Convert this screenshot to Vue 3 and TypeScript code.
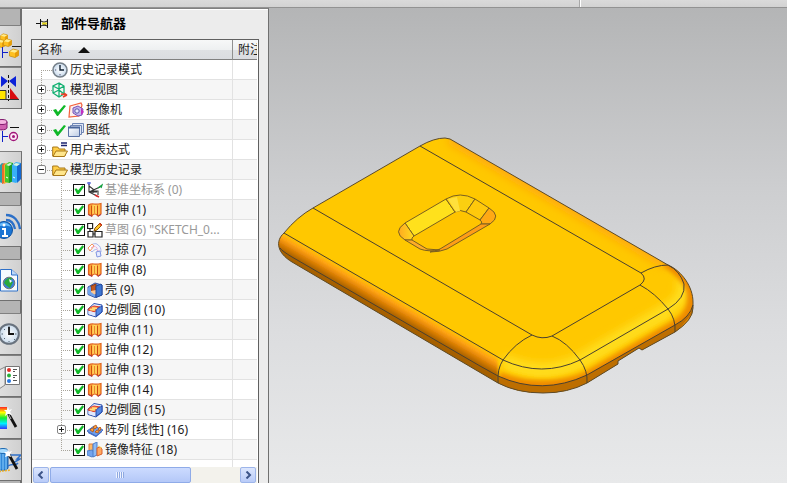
<script setup lang="ts">
import { ref } from 'vue'

interface TreeRow {
  name: string
  icon: string
  level: 0 | 1
  toggle?: 'plus' | 'minus'
  mark?: boolean
  checked?: boolean
  muted?: boolean
}

interface RailTab {
  id: string
  title: string
  spaced?: boolean
  active?: boolean
}

const tabs: RailTab[] = [
  { id: 'assembly', title: '装配导航器' },
  { id: 'constraint', title: '约束导航器' },
  { id: 'part', title: '部件导航器', active: true },
  { id: 'library', title: '重用库' },
  { id: 'web', title: 'HD3D 工具', spaced: true },
  { id: 'page', title: 'Web 浏览器', spaced: true },
  { id: 'history', title: '历史记录', spaced: true },
  { id: 'roles', title: '角色' },
  { id: 'material', title: '系统材料' },
  { id: 'wizard', title: '加工向导' },
]

const rows = ref<TreeRow[]>([
  { name: '历史记录模式', icon: 'clock', level: 0 },
  { name: '模型视图', icon: 'views', level: 0, toggle: 'plus' },
  { name: '摄像机', icon: 'camera', level: 0, toggle: 'plus', mark: true },
  { name: '图纸', icon: 'sheet', level: 0, toggle: 'plus', mark: true },
  { name: '用户表达式', icon: 'folder-eq', level: 0, toggle: 'plus' },
  { name: '模型历史记录', icon: 'folder', level: 0, toggle: 'minus' },
  { name: '基准坐标系 (0)', icon: 'csys', level: 1, checked: true, muted: true },
  { name: '拉伸 (1)', icon: 'extrude', level: 1, checked: true },
  { name: '草图 (6) "SKETCH_0...', icon: 'sketch', level: 1, checked: true, muted: true },
  { name: '扫掠 (7)', icon: 'sweep', level: 1, checked: true },
  { name: '拉伸 (8)', icon: 'extrude', level: 1, checked: true },
  { name: '壳 (9)', icon: 'shell', level: 1, checked: true },
  { name: '边倒圆 (10)', icon: 'blend', level: 1, checked: true },
  { name: '拉伸 (11)', icon: 'extrude', level: 1, checked: true },
  { name: '拉伸 (12)', icon: 'extrude', level: 1, checked: true },
  { name: '拉伸 (13)', icon: 'extrude', level: 1, checked: true },
  { name: '拉伸 (14)', icon: 'extrude', level: 1, checked: true },
  { name: '边倒圆 (15)', icon: 'blend', level: 1, checked: true },
  { name: '阵列 [线性] (16)', icon: 'pattern', level: 1, toggle: 'plus', checked: true },
  { name: '镜像特征 (18)', icon: 'mirror', level: 1, checked: true },
])

function branchClass(index: number): string {
  const level = rows.value[index].level
  const first = index === 0
  const last = index === rows.value.length - 1 || rows.value[index + 1].level < level
  const closing = level === 0 && rows.value.slice(index + 1).every((r) => r.level > 0)
  return first ? 'branch-first' : last || closing ? 'branch-last' : 'branch-mid'
}
</script>

<template>
  <div class="app">
    <svg class="sprite" aria-hidden="true">
      <defs>
        <linearGradient id="gOrange" x1="0" x2="1"><stop offset="0" stop-color="#ff8a20" /><stop offset=".45" stop-color="#ffd860" /><stop offset="1" stop-color="#ffb43c" /></linearGradient>
        <linearGradient id="gBlue" x1="0" x2="1" y2="1"><stop offset="0" stop-color="#9cc8ff" /><stop offset="1" stop-color="#2a5fc4" /></linearGradient>
        <linearGradient id="gSheet" x1="0" x2="1" y2="1"><stop offset="0" stop-color="#fff" /><stop offset="1" stop-color="#bccbe4" /></linearGradient>
        <linearGradient id="gRain" x1="0" x2="0" y2="1">
          <stop offset="0" stop-color="#f22" /><stop offset=".25" stop-color="#ff0" /><stop offset=".5" stop-color="#1e3" />
          <stop offset=".75" stop-color="#0ef" /><stop offset="1" stop-color="#33f" />
        </linearGradient>
        <radialGradient id="gFace"><stop offset="0" stop-color="#fff" /><stop offset="1" stop-color="#c8daec" /></radialGradient>
      </defs>
      <symbol id="i-clock" viewBox="0 0 16 16">
        <circle cx="8" cy="8" r="7" fill="url(#gFace)" stroke="#76808a" stroke-width="1.6" />
        <path d="M8 3v5h4" fill="none" stroke="#123" stroke-width="1.4" />
        <path d="M8 12v1.4M3 8h1.2" stroke="#557" />
      </symbol>
      <symbol id="i-views" viewBox="0 0 16 16">
        <path d="M7 1L1 4v7l6 4 5-3V4zM1 4l6 3 5-3M7 1v14M1 11l6-3 5 4" fill="none" stroke="#10b070" stroke-width="1.3" />
        <path d="M9 12l6 1-3-2M15 13l-4 2" fill="none" stroke="#e8402a" stroke-width="1.5" />
      </symbol>
      <symbol id="i-camera" viewBox="0 0 16 16">
        <path d="M2 4l11-3 1 2-3 11-10 1z" fill="#fff0ec" stroke="#f4603c" stroke-width="1.2" />
        <path d="M5 6l5-2 5 3-1 6-4 1-5-3z" fill="#c4b4ec" stroke="#7752b8" />
        <circle cx="9" cy="9" r="2.2" fill="#eae6ff" stroke="#5858a8" />
        <path d="M13 6l3 4-3 3z" fill="#c42fc0" />
      </symbol>
      <symbol id="i-sheet" viewBox="0 0 16 16">
        <path d="M4.500 1.500h11v9h-11z" fill="#dfe6f5" stroke="#6f86b4" />
        <path d="M2.500 3.500h11v9h-11z" fill="#dfe6f5" stroke="#6f86b4" />
        <path d="M.5 5.500h11v9H.5z" fill="url(#gSheet)" stroke="#5a72a6" />
        <path d="M0 5.500h12" stroke="#4a669c" stroke-width="2" />
      </symbol>
      <symbol id="i-folder" viewBox="0 0 16 16">
        <path d="M.7 13V4h5l1.500 2H13v7z" fill="#ffce48" stroke="#a87818" />
        <path d="M1 13.500L4 8h11.500L12.500 13.500z" fill="#ffe68c" stroke="#a87818" />
      </symbol>
      <symbol id="i-folder-eq" viewBox="0 0 16 16">
        <path d="M.7 14V5h5l1.500 2H13v7z" fill="#ffce48" stroke="#a87818" />
        <path d="M1 14.500L4 9h11.500L12.500 14.500z" fill="#ffe68c" stroke="#a87818" />
        <path d="M9 1h6M9 3.500h6" stroke="#1c2470" stroke-width="1.4" />
      </symbol>
      <symbol id="i-csys" viewBox="0 0 16 16">
        <path d="M2 2v8l8 4M2 10l11-5M2 4l4 3v4M6 9h5v4M2 10h8" fill="none" stroke="#333" stroke-width="1.1" />
        <path d="M0 1h4M2 0v3" stroke="#3346d0" />
        <path d="M11 6l4-3-1 3" stroke="#16a040" fill="none" stroke-width="1.3" />
        <path d="M8 13l4 2" stroke="#d82828" stroke-width="1.6" />
      </symbol>
      <symbol id="i-extrude" viewBox="0 0 16 16">
        <path d="M1.500 3Q4 1.500 7 2t7-.5v10.500L11 14l-1.500-1.500Q8 11.500 6 12.500L5 14l-3.500-1.500z" fill="url(#gOrange)" stroke="#e0601c" stroke-width="1.200" />
        <path d="M4.500 3.500V14M10.500 3.500V13.500" stroke="#d04c10" />
        <path d="M7.500 4v7.500" stroke="#e88430" />
        <path d="M1.500 12.500L5 14.500M11 14.500l3-2" fill="none" stroke="#a03464" />
      </symbol>
      <symbol id="i-sketch" viewBox="0 0 16 16">
        <path d="M.6 1.500h5v5h-5zM1 9.500h5V15H1zM8 9.500h7V15H8zM3 6.500v3M6 12h2" fill="#fff" stroke="#222" stroke-width="1.2" />
        <path d="M7 9l1-3 5-5 2 2-5 5z" fill="#ffc62c" stroke="#90580c" />
        <path d="M12.500 1.500l2 2" stroke="#e03020" stroke-width="1.600" />
      </symbol>
      <symbol id="i-sweep" viewBox="0 0 16 16">
        <path d="M2 7c1-5 7-7 9-4 2 1 3 3 3 7l-3 1c0-4-2-5-6-1z" fill="#f2f3fd" stroke="#aab6e8" />
        <path d="M1 6l4-4 2 2-4 5z" fill="#fff" stroke="#f4965c" />
        <path d="M9 10l4-1 1 5-4 1z" fill="#e6ebff" stroke="#8296e2" />
        <path d="M4 6c3-3 6-2 7 3" fill="none" stroke="#f29ac8" stroke-dasharray="2 1" />
      </symbol>
      <symbol id="i-shell" viewBox="0 0 16 16">
        <path d="M1 5l7-4 7 2v10l-7 2.500-7-3z" fill="url(#gBlue)" stroke="#3858a8" />
        <path d="M4 4l5-2v10l-5-2z" fill="#c45a20" stroke="#8c3a10" />
        <path d="M4 9l5-1v4l-3 1-2-2z" fill="#ffc890" />
        <path d="M9 4l5-2 1 1v10l-6 2.500z" fill="#3c76d2" stroke="#24489c" />
        <path d="M1 6l3-1v5l4 3v2l-7-3z" fill="#70a4ec" />
      </symbol>
      <symbol id="i-blend" viewBox="0 0 16 16">
        <path d="M1 7l6-5.500 8 1.500v7L9 15l-8-2.500z" fill="#e7efff" stroke="#2c50b0" />
        <path d="M1 8c1-3 4-3 6-4l6 1c-3 1-5 2-5 5z" fill="#ff8c50" stroke="#dc3c28" />
        <path d="M3 7.500l5 .5M5 6l5 .5" stroke="#ffe07a" stroke-width="1.500" />
        <path d="M1.500 9L8 10.500V14L1.500 12z" fill="#dfe8ff" />
        <path d="M9 10c0-3 2-4 6-6v6l-6 4.500z" fill="#5589e4" stroke="#2448a8" />
      </symbol>
      <symbol id="i-pattern" viewBox="0 0 16 16">
        <path d="M0 9l7-5 9 4-7 6z" fill="#6b9cec" stroke="#4a70c0" />
        <path d="M1 10l8 4 6-5v1l-6 5-8-4z" fill="#2e5cc0" />
        <path d="M3 8l2-2 2 1-1 3zM6 5l3-2 1 2-2 2zM8 10l2-2 2 1-1 2zM11 7l2-2 1 1-1 3z" fill="#ffa038" stroke="#b05418" stroke-width=".8" />
      </symbol>
      <symbol id="i-mirror" viewBox="0 0 16 16">
        <path d="M2 2h4v7l-4 3z" fill="#ffb864" stroke="#e07c3c" />
        <path d="M0 9l5-1 4 5-4 2-5-2z" fill="#72a4ee" stroke="#5080c8" />
        <path d="M6 2l4-2v13l-4 2z" fill="#8cbaf4" stroke="#4c7cc8" />
        <path d="M10 6l3-1 2 2v5l-5 2z" fill="#ffa860" stroke="#d8602c" />
        <path d="M11 4l4 2" fill="none" stroke="#f7d060" />
      </symbol>
      <symbol id="i-cube" viewBox="0 0 10 10">
        <path d="M.5 3.500L4 1l5.500 1.500v5L6 9.500.5 8z" fill="#ffc020" stroke="#c89010" stroke-width=".8" />
        <path d="M1 3.500l3-2 5 1.200-3 2z" fill="#ffec90" />
        <path d="M6 5l3.500-2.500v5L6 9.500z" fill="#e79c08" />
      </symbol>
    </svg>

    <header class="topbar"><div class="topbar-group"></div></header>

    <div class="workspace">
      <aside class="navigator">
        <nav class="rail" aria-label="资源条">
          <button
            v-for="tab in tabs"
            :key="tab.id"
            type="button"
            class="tab"
            :class="{ active: tab.active, spaced: tab.spaced }"
            :aria-label="tab.title"
          >
            <svg width="21" height="40" viewBox="0 1 21 40" aria-hidden="true">
              <g v-if="tab.id === 'assembly'">
                <use href="#i-cube" x="-4" y="13" width="10" height="10" /><use href="#i-cube" x="0" y="8" width="8" height="8" />
                <use href="#i-cube" x="3" y="13" width="9" height="9" />
                <path d="M12 21.500h9" stroke="#222" /><path d="M2.500 22v11M2 27.500h6" stroke="#1020c8" />
                <use href="#i-cube" x="9" y="23" width="10" height="10" />
              </g>
              <g v-else-if="tab.id === 'constraint'">
                <path d="M1 9l7 5-7 6zM16 9l-7 5 7 6z" fill="#0c22d8" />
                <path d="M8.500 8v26" stroke="#111" stroke-dasharray="3 2" />
                <path d="M-1 23.500h7v9h-7z" fill="#ffe600" stroke="#333" />
                <path d="M10 21v11.500h9z" fill="#d80c10" /><path d="M-1 32.500h20" stroke="#333" />
              </g>
              <g v-else-if="tab.id === 'part'">
                <path d="M-3 13v6c1 2.500 9 2.500 10 0v-6" fill="#d060b0" stroke="#80186c" />
                <ellipse cx="2" cy="13" rx="5" ry="2.500" fill="#f4b4e0" stroke="#80186c" />
                <path d="M10 18.500h9" stroke="#111" /><path d="M2.500 22v11M2 27.500h6" stroke="#1020c8" />
                <circle cx="13.500" cy="27.500" r="4" fill="#fbe4f4" stroke="#a01478" stroke-width="1.3" /><circle cx="13.500" cy="27.500" r="1.500" fill="#a01478" />
              </g>
              <g v-else-if="tab.id === 'library'">
                <path d="M-1 15l3-3 3 1v16l-3 3-3-1z" fill="#28a0a8" /><path d="M2 14l2-2 2 1-1 2v17l-3 1z" fill="#e86c30" />
                <path d="M4 14l2-2 2 1v18l-4 2z" fill="#f8b030" /><path d="M5 14l4-3 4 1v18l-4 2-4-1z" fill="#44c82c" />
                <path d="M9 14l4-2v18l-4 2z" fill="#189830" /><path d="M12 14l4-3 5 1-1 17-4 3-4-1z" fill="#38b0f8" />
                <path d="M17 15l4-3v16l-4 4z" fill="#1468d0" /><path d="M6 14l4-2 2 1-3 2zM13 14l3-2 4 1-3 2z" fill="#d8f4e0" />
                <path d="M6 26l2 1M13 26l2 1" stroke="#fff" />
              </g>
              <g v-else-if="tab.id === 'web'">
                <path d="M6 10c8 0 13 6 14 14M6 15c5 0 8 4 9 9" fill="none" stroke="#2c70c8" stroke-width="2.300" />
                <circle cx="4" cy="25" r="8.500" fill="#1b75d4" stroke="#0c50a0" /><path d="M-3 22c3-6 11-6 14 0-4-2-9-2-14 0z" fill="#68b8f8" />
                <path d="M2 24h3v7M2 31h6" fill="none" stroke="#fff" stroke-width="2" /><circle cx="4" cy="20" r="1.500" fill="#fff" />
              </g>
              <g v-else-if="tab.id === 'page'">
                <path d="M.5 10.500h11l6 5.500v16H.5z" fill="#f6fbff" stroke="#2e70c8" /><path d="M11.500 10.500V16h6" fill="#bcd8f8" stroke="#2e70c8" />
                <circle cx="9" cy="24" r="5.800" fill="#3a80d8" stroke="#777" /><path d="M4 24c1-4 5-6 8-5l-2 3 3 1-3 6-3-2z" fill="#2ca83c" /><path d="M9 20l3 2-2 2z" fill="#fff" />
              </g>
              <g v-else-if="tab.id === 'history'">
                <circle cx="9" cy="21" r="9.800" fill="url(#gFace)" stroke="#68727e" stroke-width="2" />
                <path d="M9 14v7h5" fill="none" stroke="#111" stroke-width="1.800" />
                <path d="M9 13v1M9 28v1M1.500 21H3M15 21h1.500M4 16l1 1M14 26l1 1M4 26l1-1" stroke="#567" />
              </g>
              <g v-else-if="tab.id === 'roles'">
                <path d="M-1 15l6-3v18l-6 4z" fill="#e8e8e8" stroke="#888" /><path d="M5.500 11.500h14v18h-14z" fill="#fff" stroke="#777" />
                <circle cx="9" cy="15" r="2" fill="#e03028" /><circle cx="9" cy="20.500" r="2" fill="#28b038" /><circle cx="9" cy="26" r="2" fill="#2878e0" />
                <path d="M13 14.500h4M13 16.500h2M13 20.500h4M13 22.500h2M13 25.500h4" stroke="#555" />
              </g>
              <g v-else-if="tab.id === 'material'">
                <path d="M0 10h7v22H0z" fill="url(#gRain)" /><path d="M7 14l9 16" stroke="#111" stroke-width="2.800" />
                <path d="M8 10l1 3 3-1-2 3 2 3-4-1-3 2 1-4-2-2h3z" fill="#fff" /><path d="M9 18l2 4" stroke="#bbb" />
              </g>
              <g v-else>
                <path d="M-2 13v16c1 3 9 3 10 0V13" fill="#3288d8" stroke="#1456a0" /><path d="M0 14v17M3 14v17M6 14v17" stroke="#8cd0ff" />
                <ellipse cx="3" cy="12" rx="5" ry="2.500" fill="#a8dcff" stroke="#1c68b0" />
                <path d="M9 16h12l-4 4h3l-7 4M8 27c4-3 8 0 10-3" fill="none" stroke="#3070c8" stroke-width="1.500" />
                <path d="M8 14l9 16" stroke="#111" stroke-width="2.800" /><path d="M8 10l1 3 3-1-2 3 1 3-3-1-3 1 1-3-2-2h3z" fill="#fff" />
                <path d="M-1 33c4-2 8-1 11-2" stroke="#f0b020" stroke-width="1.500" stroke-dasharray="2 1" fill="none" />
              </g>
            </svg>
          </button>
        </nav>

        <section class="panel">
          <h1 class="panel-title">
            <svg width="12" height="11" viewBox="0 0 12 11" aria-hidden="true">
              <path d="M0 5.500h5M4.500 1v9M11.500 1v9M5 3l2 1h2l2-1M5 8l2-1h2l2 1M7 7h3" fill="none" stroke="#111" />
              <path d="M6 4.500h5v2H6z" fill="#e8d820" />
            </svg>
            <span>部件导航器</span>
          </h1>

          <div class="tree">
            <table>
              <colgroup><col class="col-name" /><col /></colgroup>
              <thead>
                <tr>
                  <th scope="col"><span class="head">名称<svg width="12" height="6" viewBox="0 0 12 6" aria-hidden="true"><path d="M6 0L12 6H0z" fill="#111" /></svg></span></th>
                  <th scope="col"><span class="head head-note">附注</span></th>
                </tr>
              </thead>
              <tbody>
                <tr v-for="(row, i) in rows" :key="i">
                  <td>
                    <div class="row">
                      <span v-if="row.level === 1" class="slot"></span>
                      <span class="slot branch" :class="branchClass(i)">
                        <button v-if="row.toggle" type="button" class="toggle" :class="row.toggle" :aria-label="'展开或折叠 ' + row.name"></button>
                      </span>
                      <label v-if="row.level === 1" class="entry">
                        <span class="box"><input v-model="row.checked" type="checkbox" /></span>
                        <svg class="icon" aria-hidden="true"><use :href="'#i-' + row.icon" /></svg>
                        <span class="name" :class="{ muted: row.muted }">{{ row.name }}</span>
                      </label>
                      <span v-else class="entry">
                        <svg v-if="row.mark" class="icon" viewBox="0 0 16 16" aria-hidden="true"><path d="M1 8l3-1 2 3 6-7 2 1-8 10H5z" fill="#10b828" /></svg>
                        <svg class="icon" aria-hidden="true"><use :href="'#i-' + row.icon" /></svg>
                        <span class="name">{{ row.name }}</span>
                      </span>
                    </div>
                  </td>
                  <td></td>
                </tr>
                <tr class="filler"><td></td><td></td></tr>
              </tbody>
            </table>
            <div class="scrollbar">
              <button type="button" class="arrow" aria-label="向左滚动"><svg width="8" height="8" viewBox="0 0 8 8"><path d="M5.500.5L2 4l3.500 3.500" /></svg></button>
              <div class="track"><div class="thumb"></div></div>
              <button type="button" class="arrow" aria-label="向右滚动"><svg width="8" height="8" viewBox="0 0 8 8"><path d="M2.500.5L6 4 2.500 7.500" /></svg></button>
            </div>
          </div>
        </section>
      </aside>

      <main class="viewport">
        <svg class="model" viewBox="269 8 518 475" preserveAspectRatio="xMinYMin meet" role="img" aria-label="三维模型">
          <defs>
            <clipPath id="body">
              <path d="M284 233Q297 217 313 208L420 146Q434 138 445 138L450 139L668 265C682 271 693 287 693 302V308Q693 320 675 332L642 350L639 348L618 361V364L587 383Q568 393 543 393Q517 393 498 383L292 262C277 253 275 241 284 233Z" />
            </clipPath>
            <filter id="soft4" x="-10%" y="-10%" width="120%" height="120%"><feGaussianBlur stdDeviation="4" /></filter>
            <filter id="soft2" x="-10%" y="-10%" width="120%" height="120%"><feGaussianBlur stdDeviation="2" /></filter>
            <filter id="soft1" x="-10%" y="-10%" width="120%" height="120%"><feGaussianBlur stdDeviation="1" /></filter>
            <linearGradient id="side" gradientUnits="userSpaceOnUse" x1="393" y1="296" x2="382" y2="315">
              <stop offset="0" stop-color="#ffc400" /><stop offset=".25" stop-color="#ffa214" /><stop offset=".5" stop-color="#dc7f04" />
              <stop offset=".75" stop-color="#a86200" /><stop offset="1" stop-color="#a46000" />
            </linearGradient>
            <linearGradient id="wallA" x1="0" x2="1"><stop offset="0" stop-color="#ffaa20" /><stop offset="1" stop-color="#ffdc20" /></linearGradient>
          </defs>
          <g clip-path="url(#body)">
            <path d="M270 130h430v270H270z" fill="#ffc800" />
            <path d="M450 137L668 263" class="s-warm" filter="url(#soft4)" />
            <path d="M503 360Q542 379 580 360L668 309Q688 297 682 279" class="s-light" filter="url(#soft4)" />
            <path d="M498 380Q542 397 587 380L675 329Q693 319 695 302V292Q690 274 668 260" class="s-orange" filter="url(#soft2)" />
            <path d="M498 376Q542 396 587 375L675 325Q692 316 693 305V312L675 334L587 386Q542 402 498 386Z" fill="#b06600" opacity=".8" />
            <path d="M506 365Q542 380 580 365L668 314" class="s-glow" filter="url(#soft2)" />
            <path d="M270 225L284 233L497 357Q499 372 498 390L270 256Z" fill="url(#side)" filter="url(#soft1)" />
          </g>
          <g class="pocket">
            <path class="flat" d="M398 230Q399 226 405 223L446 199Q452 195 460 195Q468 195 475 199L489 208Q496 212 496 217Q496 221 490 224L447 249Q440 252 430 252Q424 251 420 248L402 237Q398 234 398 230Z" fill="#ffc400" />
            <path d="M405 223L446 199L455 212L414 236Z" fill="#ffe11c" />
            <path d="M446 199Q460 191 475 199L466 212Q460 209 455 212Z" fill="#fbcf10" />
            <path class="flat" d="M457 197L460 211L456 212L448 199Z" fill="#ffe03c" />
            <path d="M475 199L489 208L480 220L466 212Z" fill="#ffc90c" />
            <path d="M489 208Q502 216 490 224H481Q483 222 480 220Z" fill="#ffa914" />
            <path d="M405 240Q392 232 405 223L414 236Q411 238 412 240Z" fill="url(#wallA)" />
            <path d="M490 224L447 249Q440 252 430 252L440 249L481 224Z" fill="#ff9d18" />
            <path d="M405 240L420 249Q428 252 440 250L427 249L412 240Z" fill="#ffac28" />
          </g>
          <g class="edges">
            <path class="outline" d="M284 233Q297 217 313 208L420 146Q434 138 445 138L450 139L668 265C682 271 693 287 693 302V308Q693 320 675 332L642 350L639 348L618 361V364L587 383Q568 393 543 393Q517 393 498 383L292 262C277 253 275 241 284 233Z" />
            <path d="M313 208L532 335Q542 340 552 336L640 285Q648 279 641 273L420 146" />
            <path d="M284 233L503 360Q542 378 580 360L668 309Q686 298 684 284Q680 271 668 265" />
            <path d="M280 248Q282 251 292 257L480 366L498 376Q542 396 587 375L675 325Q690 317 693 305" />
            <path d="M641 273Q655 265 668 265M640 285Q655 293 668 309Q676 319 675 332" />
            <path d="M532 335Q515 343 503 360Q497 369 498 383M552 336Q567 342 580 360Q588 371 587 383" />
          </g>
        </svg>
      </main>
    </div>
  </div>
</template>

<style>
body {
  overflow: hidden;
}
</style>

<style scoped>
.app {
  display: flex;
  flex-direction: column;
  height: 100vh;
  font-family: "Noto Sans", "Noto Sans CJK SC", sans-serif;
  font-size: 12px;
  color: #1c1c1c;
}
.app *,
.app *::before {
  box-sizing: border-box;
}
.sprite {
  position: absolute;
  width: 0;
  height: 0;
}
button {
  padding: 0;
  border: 0;
  font: inherit;
}
.topbar {
  display: flex;
  flex: none;
  height: 8px;
  background: linear-gradient(#dadada, #d2d2d2);
  border-bottom: 1px solid #929292;
}
.topbar-group {
  width: 581px;
  border-right: 1px solid #fff;
  box-shadow: inset -1px 0 #a8a8a8;
}
.workspace {
  display: flex;
  flex: 1;
  min-height: 0;
}
.navigator {
  display: flex;
  flex: none;
  width: 269px;
  background: #ececec;
  border-top: 1px solid #808080;
  border-right: 1px solid #707070;
  overflow: hidden;
}
.rail {
  display: flex;
  flex-direction: column;
  flex: none;
  width: 22px;
  padding-top: 16px;
  background: linear-gradient(90deg, #b4b4b4 0 20px, #6e6e6e 20px);
}
.tab {
  flex: none;
  display: block;
  height: 42px;
  background: linear-gradient(90deg, #dedede, #d0d0d0);
  border: solid #707070;
  border-width: 1px 1px 1px 0;
  border-top-color: #808080;
}
.tab.spaced {
  margin-top: 12px;
}
.tab.active {
  background: #ececec;
  border-color: #ececec;
}
.tab svg {
  display: block;
}
.panel {
  display: flex;
  flex-direction: column;
  flex: 1;
  min-width: 0;
  padding: 0 9px;
  border-top: 1px solid #fff;
}
.panel-title {
  display: flex;
  flex: none;
  align-items: center;
  gap: 13px;
  height: 29px;
  margin: 0;
  padding: 0 0 3px 5px;
  font-size: 13px;
  line-height: 20px;
  color: #000;
}
.tree {
  display: flex;
  flex-direction: column;
  flex: 1;
  min-height: 0;
  padding-right: 1px;
  background: #fff;
  border: solid #606060;
  border-width: 1px 1px 0 1px;
  overflow: hidden;
}
table {
  width: 100%;
  table-layout: fixed;
  border-collapse: separate;
  border-spacing: 0;
}
.col-name {
  width: 201px;
}
th,
td {
  padding: 0;
  overflow: hidden;
  white-space: nowrap;
}
th {
  height: 20px;
  font-weight: 400;
  text-align: left;
  background: linear-gradient(#f7f8f8, #eef0f1 50%, #dfe1e4 50%, #dadce0);
  border-bottom: 1px solid #808080;
}
th:first-child {
  border-right: 1px solid #909090;
}
.head {
  display: flex;
  align-items: center;
  gap: 16px;
  padding-left: 6px;
  line-height: 18px;
}
.head-note {
  padding-left: 5px;
}
td {
  height: 20px;
  border-bottom: 1px solid #e2e2e2;
}
td:first-child {
  border-right: 1px solid #e2e2e2;
}
tr:nth-child(even) td {
  background: #f6f6f6;
}
.filler td {
  height: 7px;
  border-bottom: 0;
}
.row,
.entry {
  display: flex;
  align-items: center;
  height: 19px;
}
.slot {
  display: flex;
  flex: none;
  align-items: center;
  width: 20px;
  height: 20px;
  padding-left: 5px;
}
.branch {
  --dots-y: repeating-linear-gradient(#a8a49a 0 1px, transparent 1px 2px);
  --dots-x: repeating-linear-gradient(90deg, #a8a49a 0 1px, transparent 1px 2px);
  background-image: var(--dots-y), var(--dots-x);
  background-position: 9px 0, 9px 10px;
  background-size: 1px 20px, 11px 1px;
  background-repeat: no-repeat;
}
.branch-first {
  background-position: 9px 10px, 9px 10px;
}
.branch-last {
  background-size: 1px 10px, 11px 1px;
}
.toggle {
  width: 9px;
  height: 9px;
  border: 1px solid #858585;
  border-radius: 2px;
  background: linear-gradient(#222, #222) center / 5px 1px no-repeat, #fff;
}
.toggle.plus {
  background: linear-gradient(#222, #222) center / 5px 1px no-repeat, linear-gradient(#222, #222) center / 1px 5px no-repeat, #fff;
}
.icon {
  flex: none;
  width: 16px;
  height: 16px;
}
.box {
  display: flex;
  flex: none;
  width: 15px;
  padding-left: 1px;
}
.box input {
  appearance: none;
  width: 12px;
  height: 12px;
  margin: 0;
  border: 1px solid #111;
  background: #fff;
}
.box input:checked::before {
  content: "";
  display: block;
  height: 10px;
  background: #10b828;
  clip-path: polygon(4% 42%, 28% 40%, 40% 60%, 84% 8%, 100% 22%, 48% 96%, 30% 96%);
}
.name {
  padding-left: 2px;
  line-height: 19px;
}
.name.muted {
  color: #999;
}
.scrollbar {
  display: flex;
  flex: none;
  height: 16px;
  padding: 0 1px;
  background: #f3f2ec;
}
.arrow {
  display: flex;
  align-items: center;
  justify-content: center;
  flex: none;
  width: 16px;
  border: 1px solid #9db5ea;
  border-radius: 2px;
  background: linear-gradient(#dce6fd, #b9cbf8);
}
.arrow path {
  fill: none;
  stroke: #3c5488;
  stroke-width: 2;
}
.track {
  display: flex;
  flex: 1;
  padding-left: 1px;
}
.thumb {
  width: 74%;
  border: 1px solid #8fabe8;
  border-radius: 2px;
  background: repeating-linear-gradient(90deg, #eef3ff 0 1px, #8ea8e0 1px 2px) center / 8px 6px no-repeat, linear-gradient(#ccdbff, #b4c8f8);
}
.viewport {
  flex: 1;
  min-width: 0;
  background: linear-gradient(#b4b5b6, #cdced0 38%, #dcdddf 68%, #e8e9ea);
  overflow: hidden;
}
.model {
  display: block;
  width: 100%;
  height: 100%;
}
.edges path,
.pocket path {
  stroke: #4a4030;
  stroke-width: 1;
  stroke-linejoin: round;
}
.pocket path {
  stroke: #7a6020;
}
.pocket .flat {
  stroke: none;
}
.edges path {
  fill: none;
}
.edges .outline {
  stroke: #5c4a2c;
}
.s-warm,
.s-light,
.s-orange,
.s-glow {
  fill: none;
}
.s-warm {
  stroke: #ffac10;
  stroke-width: 14;
}
.s-light {
  stroke: #ffe020;
  stroke-width: 12;
}
.s-orange {
  stroke: #ee8a06;
  stroke-width: 16;
}
.s-glow {
  stroke: #ffdc1c;
  stroke-width: 5;
}
</style>
